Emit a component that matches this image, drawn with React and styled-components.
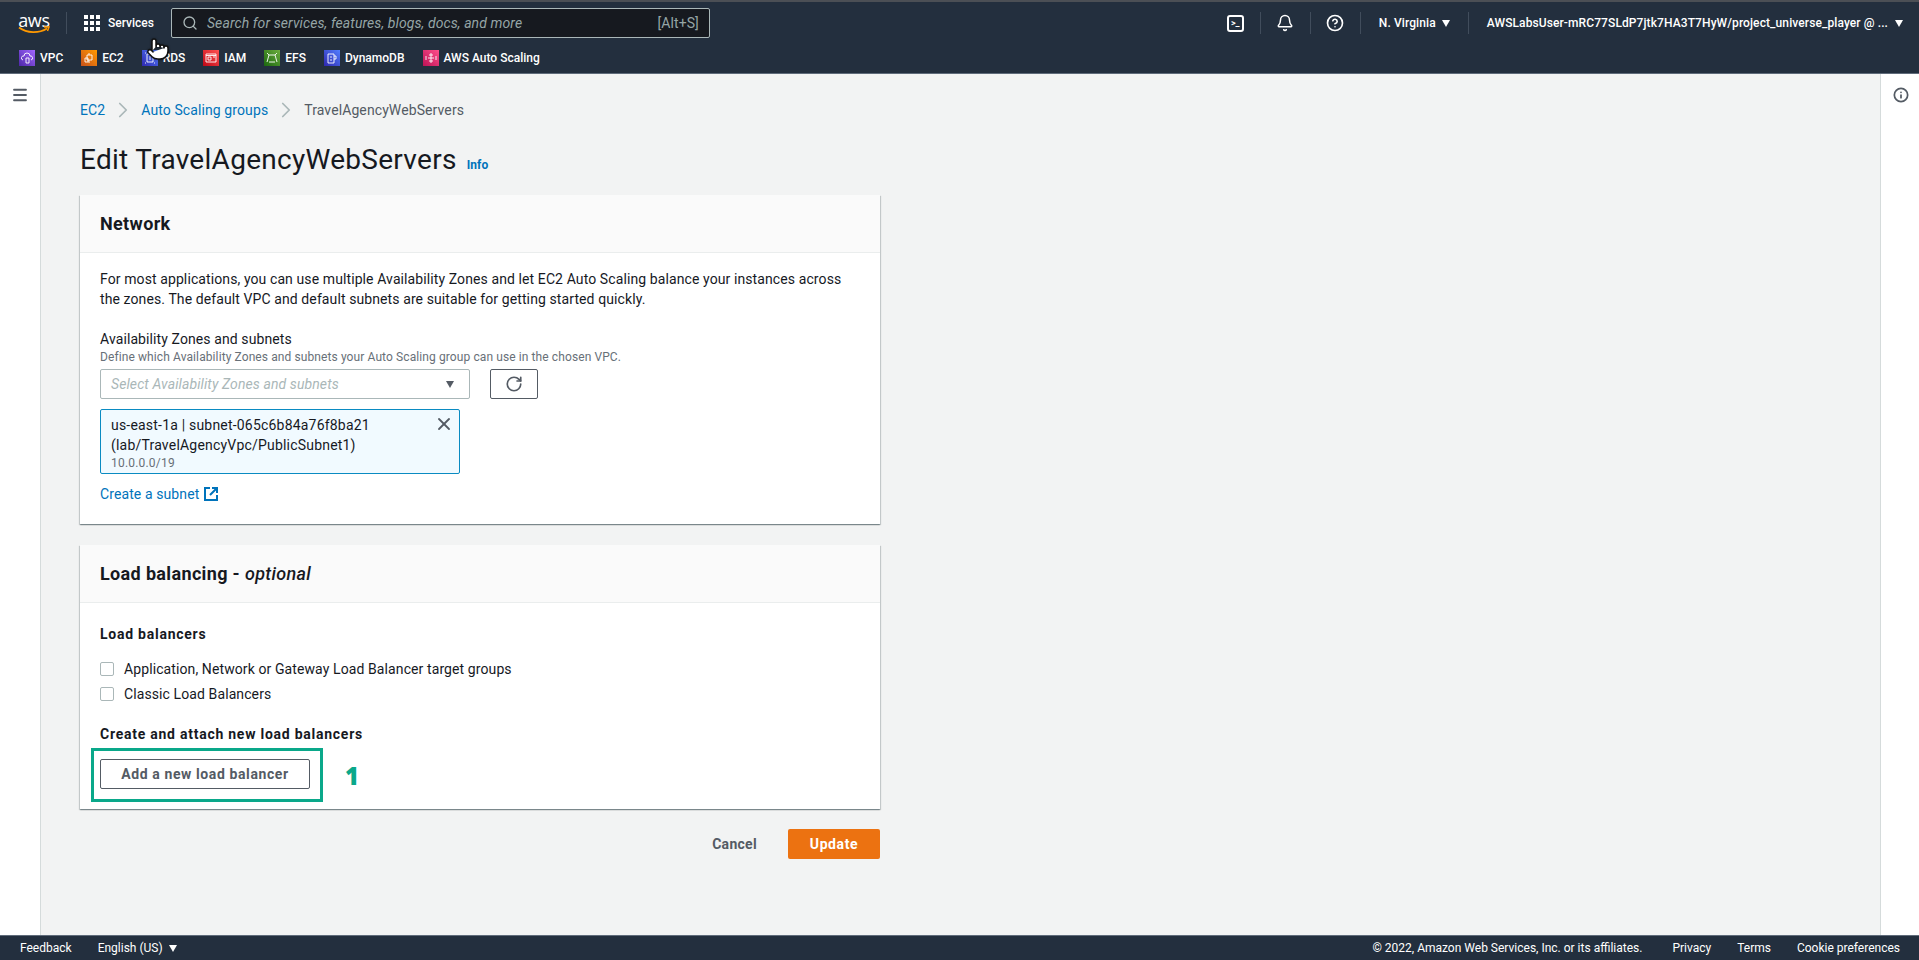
import styled, { createGlobalStyle } from "styled-components"
import { Search, Bell, CircleHelp, RotateCw, X, Info, Menu, ChevronRight, Pointer } from "lucide-react"

const FONT = `Roboto, "Noto Sans", Arial, sans-serif`

const GlobalStyle = createGlobalStyle`
  html, body { margin: 0; padding: 0; height: 100%; }
  body { font-family: ${FONT}; font-size: 14px; letter-spacing: 0.1px; color: #16191f; background: #f2f3f3; }
  * { box-sizing: border-box; }
`

const Page = styled.div`
  position: relative;
  display: flex;
  flex-direction: column;
  height: 960px;
  overflow: hidden;
`

const Header = styled.header`
  height: 74px;
  flex: none;
  background: #232f3e;
  border-top: 2px solid #4b4f55;
  border-bottom: 1px solid #5f6b7a;
`

const TopRow = styled.div`
  display: flex;
  align-items: center;
  height: 36px;
  margin-top: 3px;
  padding-left: 18px;
`

const LogoBox = styled.div`
  position: relative;
  width: 32px;
  height: 22px;
  margin-right: 16px;
`

const LogoText = styled.span`
  display: block;
  font-family: "Open Sans", sans-serif;
  font-size: 18px;
  line-height: 17px;
  letter-spacing: -0.3px;
  color: #fff;
  text-align: center;
`

const Smile = styled.svg`
  position: absolute;
  left: 0;
  top: 14px;
`

const Divider = styled.span`
  width: 1px;
  height: 22px;
  background: #414d5c;
  flex: none;
`

const GridIcon = styled.span`
  display: grid;
  grid-template-columns: repeat(3, 4px);
  grid-auto-rows: 4px;
  gap: 2px;
  margin: 0 8px 0 17px;
  span { background: #fff; }
`

const NavText = styled.span`
  color: #fff;
  font-size: 12px;
  font-weight: 500;
  letter-spacing: ${p => p.$spacing || 0}px;
  white-space: nowrap;
`

const SearchBox = styled.div`
  display: flex;
  align-items: center;
  width: 539px;
  height: 30px;
  margin-left: 17px;
  padding: 0 10px;
  background: #16191f;
  border: 1px solid #aab7b8;
  border-radius: 2px;
  color: #aab7b8;
`

const SearchHint = styled.span`
  flex: 1;
  margin-left: 9px;
  font-size: 14px;
  font-style: italic;
  color: #95a5a6;
`

const SearchKey = styled.span`
  font-size: 14px;
  color: #95a5a6;
`

const RightNav = styled.div`
  display: flex;
  align-items: center;
  margin-left: auto;
  padding-right: 16px;
  color: #fff;
`

const IconSlot = styled.span`
  display: flex;
  justify-content: center;
  width: 49px;
`

const TermIcon = styled.span`
  display: flex;
  align-items: center;
  justify-content: center;
  width: 17px;
  height: 17px;
  border: 2px solid #fff;
  border-radius: 3px;
  font-size: 9px;
  font-weight: 700;
  line-height: 1;
`

const Caret = styled.span`
  width: 0;
  height: 0;
  flex: none;
  margin-left: ${p => p.$gap || 6}px;
  border-left: 4px solid transparent;
  border-right: 4px solid transparent;
  border-top: 7px solid ${p => p.$color || "#fff"};
`

const RegionItem = styled.span`
  display: flex;
  align-items: center;
  padding: 0 18px;
`

const AccountItem = styled.span`
  display: flex;
  align-items: center;
  padding-left: 18px;
`

const FavRow = styled.div`
  display: flex;
  align-items: center;
  height: 20px;
  margin-top: 7px;
  padding-left: 19px;
  gap: 18px;
`

const Fav = styled.span`
  display: flex;
  align-items: center;
  gap: 5px;
  color: #fff;
  font-size: 12px;
  font-weight: 500;
  letter-spacing: 0;
`

const FavIcon = styled.span`
  display: flex;
  align-items: center;
  justify-content: center;
  width: 16px;
  height: 16px;
  background: linear-gradient(45deg, ${p => p.$from}, ${p => p.$to});
`

const Body = styled.div`
  display: flex;
  flex: 1;
  min-height: 0;
`

const LeftRail = styled.aside`
  width: 41px;
  flex: none;
  padding: 12px 0 0 11px;
  background: #fff;
  border-right: 1px solid #d5dbdb;
  color: #545b64;
`

const RightRail = styled.aside`
  width: 39px;
  flex: none;
  padding: 13px 0 0 12px;
  background: #fff;
  border-left: 1px solid #d5dbdb;
  color: #545b64;
`

const Content = styled.main`
  flex: 1;
  padding: 26px 0 0 39px;
`

const Column = styled.div`
  width: 800px;
`

const Crumbs = styled.nav`
  display: flex;
  align-items: center;
  height: 20px;
`

const Crumb = styled.a`
  color: ${p => (p.$current ? "#545b64" : "#0073bb")};
  font-size: 14px;
  white-space: nowrap;
`

const CrumbSep = styled.span`
  display: flex;
  width: 36px;
  justify-content: center;
  color: #aab7b8;
`

const TitleRow = styled.div`
  display: flex;
  align-items: baseline;
  gap: 10px;
  margin: 22px 0 0;
  height: 36px;
`

const Title = styled.h1`
  margin: 0;
  font-size: 28px;
  font-weight: 400;
  line-height: 36px;
  letter-spacing: 0.28px;
  color: #16191f;
`

const InfoLink = styled.a`
  font-size: 12px;
  font-weight: 700;
  color: #0073bb;
`

const Card = styled.section`
  height: ${p => p.$height}px;
  margin-top: ${p => p.$top}px;
  background: #fff;
  box-shadow: 0 1px 1px 0 rgba(0, 28, 36, 0.3), 1px 1px 1px 0 rgba(0, 28, 36, 0.15),
    -1px 1px 1px 0 rgba(0, 28, 36, 0.15);
`

const CardHeader = styled.div`
  display: flex;
  align-items: center;
  height: 58px;
  padding: 0 20px;
  background: #fafafa;
  border-bottom: 1px solid #eaeded;
`

const CardTitle = styled.h2`
  margin: 0;
  font-size: 18px;
  font-weight: 700;
  letter-spacing: 0.35px;
  color: #16191f;
  em { font-weight: 500; }
`

const CardBody = styled.div`
  padding: 16px 20px 0;
`

const Paragraph = styled.p`
  margin: 0;
  line-height: 20px;
  color: #16191f;
`

const FieldLabel = styled.div`
  margin-top: 20px;
  line-height: 20px;
  color: #16191f;
`

const FieldHint = styled.div`
  font-size: 12px;
  line-height: 16px;
  color: #687078;
`

const SelectRow = styled.div`
  display: flex;
  gap: 20px;
  margin-top: 4px;
`

const SelectBox = styled.div`
  display: flex;
  align-items: center;
  justify-content: space-between;
  width: 370px;
  height: 30px;
  padding: 0 15px 0 10px;
  background: #fff;
  border: 1px solid #aab7b8;
  border-radius: 2px;
`

const Placeholder = styled.span`
  font-style: italic;
  color: #aab7b8;
`

const RefreshButton = styled.button`
  display: flex;
  align-items: center;
  justify-content: center;
  width: 48px;
  height: 30px;
  padding: 0;
  background: #fff;
  border: 1px solid #545b64;
  border-radius: 2px;
  color: #545b64;
`

const Token = styled.div`
  position: relative;
  width: 360px;
  height: 65px;
  margin-top: 10px;
  padding: 5px 40px 0 10px;
  background: #f1faff;
  border: 1px solid #0a8bc2;
  border-radius: 2px;
  line-height: 20px;
  letter-spacing: 0.2px;
`

const TokenClose = styled.span`
  position: absolute;
  top: 4px;
  right: 5px;
  display: flex;
  color: #545b64;
`

const TokenHint = styled.div`
  font-size: 12px;
  line-height: 16px;
  color: #687078;
`

const LinkRow = styled.a`
  display: flex;
  align-items: center;
  gap: 5px;
  margin-top: 10px;
  line-height: 20px;
  color: #0073bb;
`

const SubTitle = styled.div`
  margin-top: ${p => p.$top}px;
  font-weight: 700;
  letter-spacing: 0.75px;
  line-height: 20px;
  color: #16191f;
`

const CheckRow = styled.label`
  display: flex;
  align-items: center;
  gap: 10px;
  height: 25px;
  color: #16191f;
`

const CheckRows = styled.div`
  margin-top: 12px;
`

const CheckBox = styled.span`
  width: 14px;
  height: 14px;
  flex: none;
  background: #fff;
  border: 1px solid #aab7b8;
  border-radius: 2px;
`

const SecondaryButton = styled.button`
  display: block;
  width: 210px;
  height: 30px;
  margin-top: 15px;
  padding: 0;
  background: #fff;
  border: 1px solid #545b64;
  border-radius: 2px;
  color: #545b64;
  font-family: ${FONT};
  font-size: 14px;
  font-weight: 700;
  letter-spacing: 0.6px;
`

const Actions = styled.div`
  display: flex;
  align-items: center;
  justify-content: flex-end;
  margin-top: 20px;
`

const CancelButton = styled.a`
  margin-right: 31px;
  font-weight: 700;
  letter-spacing: 0.3px;
  color: #545b64;
`

const PrimaryButton = styled.button`
  width: 92px;
  height: 30px;
  padding: 0;
  background: #ec7211;
  border: none;
  border-radius: 2px;
  color: #fff;
  font-family: ${FONT};
  font-size: 14px;
  font-weight: 700;
  letter-spacing: 0.6px;
`

const Footer = styled.footer`
  display: flex;
  align-items: center;
  height: 25px;
  flex: none;
  padding: 0 19px 0 20px;
  background: #232f3e;
  border-top: 1px solid #5f6b7a;
  color: #fff;
  font-size: 12px;
  letter-spacing: 0;
`

const FooterLanguage = styled.span`
  display: flex;
  align-items: center;
  margin-left: 26px;
`

const FooterLinks = styled.div`
  display: flex;
  align-items: center;
  gap: 26px;
  margin-left: auto;
`

const Copyright = styled.span`
  margin-right: 4px;
`

const HighlightBox = styled.div`
  position: absolute;
  left: 91px;
  top: 748px;
  width: 232px;
  height: 54px;
  border: 3px solid #0aa88a;
  pointer-events: none;
`

const StepNumber = styled.span`
  position: absolute;
  left: 345px;
  top: 762px;
  font-family: "Open Sans", sans-serif;
  font-size: 24px;
  font-weight: 800;
  line-height: 28px;
  color: #0aa88a;
`

const HandCursor = styled.span`
  position: absolute;
  left: 146px;
  top: 37px;
  display: flex;
  color: #111;
  filter: drop-shadow(0 0 1px rgba(0, 0, 0, 0.4));
`

const services = [
  { name: "VPC", from: "#4d27a8", to: "#a166ff", d: "M4 10a2 2 0 0 1 1-4 3 3 0 0 1 6 0 2 2 0 0 1 1 4M7 8h3v5H7z" },
  { name: "EC2", from: "#c8511b", to: "#ff9900", d: "M6 5h5v5H6zM4 8h3v4H4zM8 3v2M8 10v3" },
  { name: "RDS", from: "#2e27ad", to: "#527fff", d: "M5 4h6v8H5zM3 3h1M12 3h1M3 13h1M12 13h1M8 6v4" },
  { name: "IAM", from: "#bd0816", to: "#ff5252", d: "M3 4h10v8H3zM5 7h3v3H5zM10 7h2M3 5.500h10" },
  { name: "EFS", from: "#1b660f", to: "#6cae3e", d: "M5 5h6l2 7M5 5l-2 7M5 12h6M3 3l2 2M13 3l-2 2" },
  { name: "DynamoDB", from: "#2e27ad", to: "#527fff", d: "M4 4h6v9H4zM10 6h2v3h-2M6 7h2M6 10h2" },
  { name: "AWS Auto Scaling", from: "#bc1356", to: "#ff4f8b", d: "M8 3v10M5 8h6M3 6v4M13 6v4M6 5h4M6 11h4" },
]

function ExternalIcon() {
  return (
    <svg width="14" height="14" viewBox="0 0 14 14" fill="none" stroke="#0073bb" strokeWidth="2">
      <path d="M6 1H1v12h12V8" />
      <path d="M8 1h5v5M13 1 6 8" />
    </svg>
  )
}

function App() {
  return (
    <Page>
      <GlobalStyle />
      <Header>
        <TopRow>
          <LogoBox>
            <LogoText>aws</LogoText>
            <Smile width="32" height="9" viewBox="0 0 32 9" fill="none">
              <path d="M1 1.500c8 6 20 6 28 1" stroke="#ff9900" strokeWidth="1.800" />
              <path d="M26 1h5l-1.500 4" stroke="#ff9900" strokeWidth="1.500" />
            </Smile>
          </LogoBox>
          <Divider />
          <GridIcon>
            {Array.from({ length: 9 }).map((_, i) => (
              <span key={i} />
            ))}
          </GridIcon>
          <NavText>Services</NavText>
          <SearchBox>
            <Search size={16} strokeWidth={2} />
            <SearchHint>Search for services, features, blogs, docs, and more</SearchHint>
            <SearchKey>[Alt+S]</SearchKey>
          </SearchBox>
          <RightNav>
            <IconSlot>
              <TermIcon>&gt;_</TermIcon>
            </IconSlot>
            <Divider />
            <IconSlot>
              <Bell size={18} strokeWidth={2} />
            </IconSlot>
            <Divider />
            <IconSlot>
              <CircleHelp size={18} strokeWidth={2.2} />
            </IconSlot>
            <Divider />
            <RegionItem>
              <NavText $spacing={0.1}>N. Virginia</NavText>
              <Caret />
            </RegionItem>
            <Divider />
            <AccountItem>
              <NavText $spacing={0.1}>AWSLabsUser-mRC77SLdP7jtk7HA3T7HyW/project_universe_player @ ...</NavText>
              <Caret $gap={7} />
            </AccountItem>
          </RightNav>
        </TopRow>
        <FavRow>
          {services.map(s => (
            <Fav key={s.name}>
              <FavIcon $from={s.from} $to={s.to}>
                <svg width="16" height="16" viewBox="0 0 16 16" fill="none" stroke="#fff" strokeWidth="0.900">
                  <path d={s.d} />
                </svg>
              </FavIcon>
              {s.name}
            </Fav>
          ))}
        </FavRow>
      </Header>

      <Body>
        <LeftRail>
          <Menu size={18} strokeWidth={2.4} />
        </LeftRail>
        <Content>
          <Column>
            <Crumbs>
              <Crumb>EC2</Crumb>
              <CrumbSep>
                <ChevronRight size={26} strokeWidth={1.6} />
              </CrumbSep>
              <Crumb>Auto Scaling groups</Crumb>
              <CrumbSep>
                <ChevronRight size={26} strokeWidth={1.6} />
              </CrumbSep>
              <Crumb $current>TravelAgencyWebServers</Crumb>
            </Crumbs>
            <TitleRow>
              <Title>Edit TravelAgencyWebServers</Title>
              <InfoLink>Info</InfoLink>
            </TitleRow>

            <Card $top={17} $height={329}>
              <CardHeader>
                <CardTitle>Network</CardTitle>
              </CardHeader>
              <CardBody>
                <Paragraph>
                  For most applications, you can use multiple Availability Zones and let EC2 Auto Scaling balance your
                  instances across the zones. The default VPC and default subnets are suitable for getting started
                  quickly.
                </Paragraph>
                <FieldLabel>Availability Zones and subnets</FieldLabel>
                <FieldHint>Define which Availability Zones and subnets your Auto Scaling group can use in the chosen VPC.</FieldHint>
                <SelectRow>
                  <SelectBox>
                    <Placeholder>Select Availability Zones and subnets</Placeholder>
                    <Caret $color="#545b64" $gap={0} />
                  </SelectBox>
                  <RefreshButton>
                    <RotateCw size={18} strokeWidth={2.2} />
                  </RefreshButton>
                </SelectRow>
                <Token>
                  us-east-1a | subnet-065c6b84a76f8ba21
                  <br />
                  (lab/TravelAgencyVpc/PublicSubnet1)
                  <TokenHint>10.0.0.0/19</TokenHint>
                  <TokenClose>
                    <X size={20} strokeWidth={2.2} />
                  </TokenClose>
                </Token>
                <LinkRow>
                  Create a subnet
                  <ExternalIcon />
                </LinkRow>
              </CardBody>
            </Card>

            <Card $top={21} $height={264}>
              <CardHeader>
                <CardTitle>
                  Load balancing - <em>optional</em>
                </CardTitle>
              </CardHeader>
              <CardBody>
                <SubTitle $top={5}>Load balancers</SubTitle>
                <CheckRows>
                  <CheckRow>
                    <CheckBox />
                    Application, Network or Gateway Load Balancer target groups
                  </CheckRow>
                  <CheckRow>
                    <CheckBox />
                    Classic Load Balancers
                  </CheckRow>
                </CheckRows>
                <SubTitle $top={18}>Create and attach new load balancers</SubTitle>
                <SecondaryButton>Add a new load balancer</SecondaryButton>
              </CardBody>
            </Card>

            <Actions>
              <CancelButton>Cancel</CancelButton>
              <PrimaryButton>Update</PrimaryButton>
            </Actions>
          </Column>
        </Content>
        <RightRail>
          <Info size={16} strokeWidth={2.6} />
        </RightRail>
      </Body>

      <Footer>
        <span>Feedback</span>
        <FooterLanguage>
          English (US)
          <Caret />
        </FooterLanguage>
        <FooterLinks>
          <Copyright>© 2022, Amazon Web Services, Inc. or its affiliates.</Copyright>
          <span>Privacy</span>
          <span>Terms</span>
          <span>Cookie preferences</span>
        </FooterLinks>
      </Footer>

      <HighlightBox />
      <StepNumber>1</StepNumber>
      <HandCursor>
        <Pointer size={24} fill="#fff" strokeWidth={1.5} />
      </HandCursor>
    </Page>
  )
}

export default App
